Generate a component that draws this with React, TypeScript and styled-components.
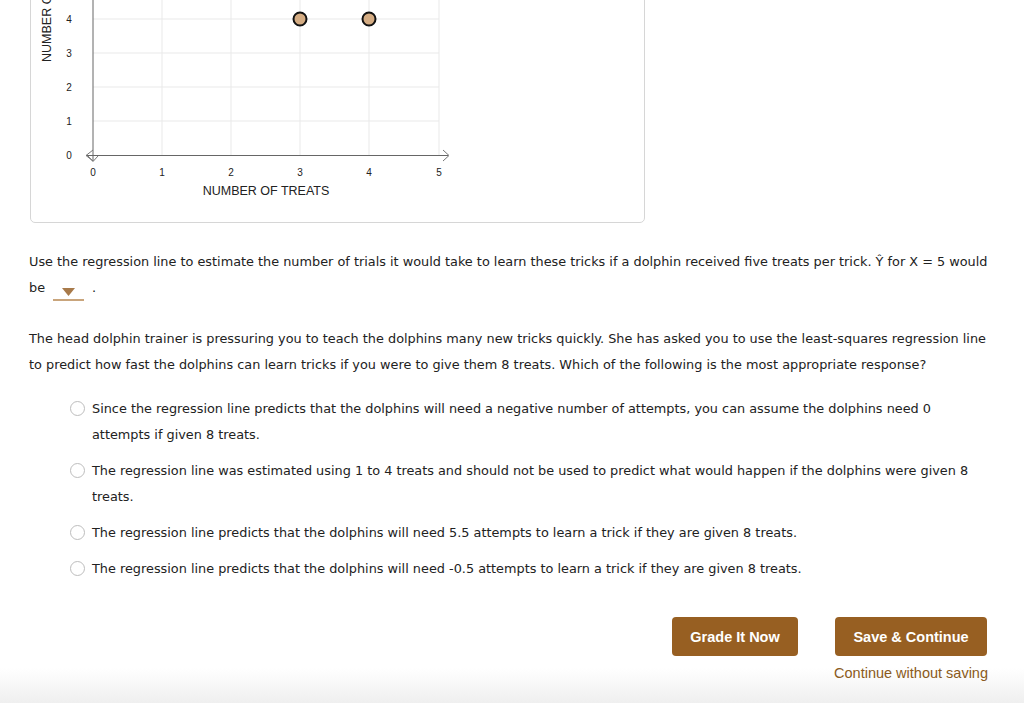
import React from "react";
import styled, { createGlobalStyle } from "styled-components";

const Global = createGlobalStyle`
  html, body { margin: 0; padding: 0; background: #fff; }
  body { font-family: "DejaVu Sans", Verdana, sans-serif; color: #222; overflow: hidden; }
`;

const Page = styled.div`
  position: relative;
  width: 1024px;
  height: 703px;
  overflow: hidden;
  background: linear-gradient(to bottom, #fff 0, #fff 668px, #efefef 703px);
`;

const Content = styled.div`
  padding-left: 29px;
  width: 972px;
`;

const ChartCard = styled.div`
  margin-top: -20px;
  margin-left: 1px;
  width: 615px;
  height: 243px;
  border: 1px solid #d6d6d6;
  border-radius: 5px;
  box-sizing: border-box;
  overflow: hidden;
  background: #fff;
`;

const ChartSvg = styled.svg`
  display: block;
  margin-top: 19px;
  font-family: "Liberation Sans", Arial, sans-serif;
`;

const Para = styled.p`
  margin: 0;
  font-size: 12.85px;
  line-height: 26px;
  color: #222;
`;

const FirstPara = styled(Para)`
  margin-top: 26px;
`;

const SecondPara = styled(Para)`
  margin-top: 25px;
`;

const Dropdown = styled.span`
  display: inline-flex;
  align-items: center;
  justify-content: center;
  width: 31px;
  height: 14px;
  margin-left: 8px;
  margin-right: 8px;
  border-bottom: 2px solid #c9a57c;
  vertical-align: -4px;
`;

const Options = styled.div`
  margin-top: 18px;
  margin-left: 41px;
  margin-right: 20px;
  display: flex;
  flex-direction: column;
  gap: 10px;
`;

const Option = styled.label`
  display: flex;
  align-items: flex-start;
  gap: 7px;
  font-size: 12.85px;
  line-height: 26px;
  color: #222;
`;

const Radio = styled.span`
  flex: none;
  width: 15px;
  height: 15px;
  margin-top: 5px;
  border: 1px solid #bdbdbd;
  border-radius: 50%;
  box-sizing: border-box;
  background: #fff;
`;

const Actions = styled.div`
  position: absolute;
  top: 617px;
  right: 36px;
  display: flex;
  gap: 36px;
  align-items: flex-start;
`;

const ActionCol = styled.div`
  display: flex;
  flex-direction: column;
  align-items: center;
  gap: 9px;
`;

const Button = styled.button<{ $w: number }>`
  width: ${(p) => p.$w}px;
  height: 39px;
  border: none;
  border-radius: 4px;
  background: #975f22;
  color: #fff;
  font-family: "Liberation Sans", Arial, sans-serif;
  font-weight: bold;
  font-size: 14.5px;
  cursor: pointer;
`;

const LinkText = styled.a`
  font-family: "Liberation Sans", Arial, sans-serif;
  font-size: 14.5px;
  color: #8a5a20;
  text-decoration: none;
`;

const xs = [93, 162, 231, 300, 369, 439];
const ys = [155, 121, 87, 53, 19];

function Chart() {
  return (
    <ChartSvg width={613} height={202} viewBox="31 0 613 202">
      {xs.slice(1).map((x) => (
        <line key={"v" + x} x1={x} y1={0} x2={x} y2={155} stroke="#e9e9e9" strokeWidth={1} />
      ))}
      {ys.slice(1).map((y) => (
        <line key={"h" + y} x1={93} y1={y} x2={439} y2={y} stroke="#e9e9e9" strokeWidth={1} />
      ))}
      <line x1={93} y1={0} x2={93} y2={161} stroke="#666" strokeWidth={1} />
      <line x1={86} y1={155.5} x2={448} y2={155.5} stroke="#666" strokeWidth={1} />
      <polyline points="93,150 86,155.5 93,161" fill="none" stroke="#777" strokeWidth={1} />
      <polyline points="88,156 93,161.5 98,156" fill="none" stroke="#777" strokeWidth={1} />
      <polyline points="443,150 449,155.5 443,161" fill="none" stroke="#777" strokeWidth={1} />
      {xs.map((x, i) => (
        <text key={"xt" + i} x={x} y={176} fontSize={10} fill="#222" textAnchor="middle">
          {i}
        </text>
      ))}
      {ys.map((y, i) => (
        <text key={"yt" + i} x={69} y={y + 3.5} fontSize={10} fill="#222" textAnchor="middle">
          {i}
        </text>
      ))}
      <text x={266} y={195} fontSize={12.5} fill="#222" textAnchor="middle">
        NUMBER OF TREATS
      </text>
      <text
        x={50.5}
        y={62}
        fontSize={12.5}
        fill="#222"
        transform="rotate(-90 50.5 62)"
      >
        NUMBER OF ATTEMPTS
      </text>
      <circle cx={300} cy={19} r={6.5} fill="#d4ac83" stroke="#111" strokeWidth={2} />
      <circle cx={369} cy={19} r={6.5} fill="#d4ac83" stroke="#111" strokeWidth={2} />
    </ChartSvg>
  );
}

const options = [
  "Since the regression line predicts that the dolphins will need a negative number of attempts, you can assume the dolphins need 0 attempts if given 8 treats.",
  "The regression line was estimated using 1 to 4 treats and should not be used to predict what would happen if the dolphins were given 8 treats.",
  "The regression line predicts that the dolphins will need 5.5 attempts to learn a trick if they are given 8 treats.",
  "The regression line predicts that the dolphins will need -0.5 attempts to learn a trick if they are given 8 treats.",
];

export default function App() {
  return (
    <Page>
      <Global />
      <Content>
        <ChartCard>
          <Chart />
        </ChartCard>
        <FirstPara>
          Use the regression line to estimate the number of trials it would take to learn these tricks if a
          dolphin received five treats per trick. Ŷ for X = 5 would be
          <Dropdown>
            <svg width="13" height="8" viewBox="0 0 13 8">
              <polygon points="0,0 13,0 6.5,8" fill="#a87a4a" />
            </svg>
          </Dropdown>.
        </FirstPara>
        <SecondPara>
          The head dolphin trainer is pressuring you to teach the dolphins many new tricks quickly. She has asked
          you to use the least-squares regression line to predict how fast the dolphins can learn tricks if you
          were to give them 8 treats. Which of the following is the most appropriate response?
        </SecondPara>
        <Options>
          {options.map((o, i) => (
            <Option key={i}>
              <Radio />
              <span>{o}</span>
            </Option>
          ))}
        </Options>
      </Content>
      <Actions>
        <ActionCol>
          <Button $w={126}>Grade It Now</Button>
        </ActionCol>
        <ActionCol>
          <Button $w={152}>Save &amp; Continue</Button>
          <LinkText>Continue without saving</LinkText>
        </ActionCol>
      </Actions>
    </Page>
  );
}
